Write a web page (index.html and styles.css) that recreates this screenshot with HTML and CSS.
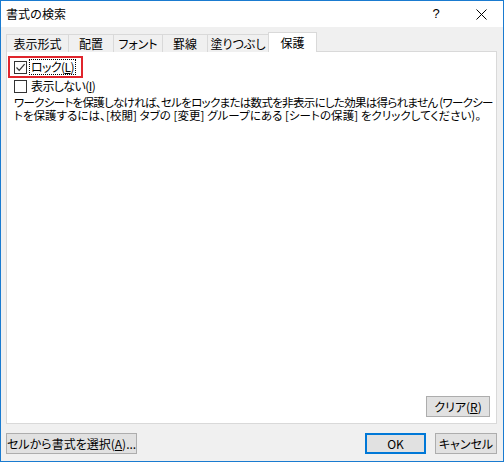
FILE: index.html
```html
<!DOCTYPE html>
<html lang="ja">
<head>
<meta charset="utf-8">
<title>書式の検索</title>
<link rel="stylesheet" href="styles.css">
</head>
<body>
<div class="window">
  <div class="titlebar">
    <span class="title">書式の検索</span>
    <span class="help">?</span>
    <span class="close">
      <svg width="11" height="11" viewBox="0 0 11 11"><path d="M0.5 0.5 L10.5 10.5 M10.5 0.5 L0.5 10.5" stroke="#000" stroke-width="1" fill="none"/></svg>
    </span>
  </div>
  <div class="body">
    <div class="tabs">
      <div class="tab t1">表示形式</div>
      <div class="tab t2">配置</div>
      <div class="tab t3">フォント</div>
      <div class="tab t4">罫線</div>
      <div class="tab t5">塗りつぶし</div>
      <div class="tab t6 active">保護</div>
    </div>
    <div class="panel">
      <div class="lockrow">
        <span class="box">
          <svg width="11" height="11" viewBox="0 0 11 11"><path d="M1.5 5.5 L4.2 8.3 L9.6 2.2" stroke="#333" stroke-width="1.2" fill="none"/></svg>
        </span>
        <span class="lbl focus">ロック(<u>L</u>)</span>
      </div>
      <div class="row">
        <span class="box"></span>
        <span class="lbl">表示しない(<u>I</u>)</span>
      </div>
      <p class="desc"><span class="line l1">ワークシートを保護しなければ、セルをロックまたは数式を非表示にした効果は得られません (ワークシー</span><span class="line l2">トを保護するには、[校閲] タブの [変更] グループにある [シートの保護] をクリックしてください)。</span></p>
      <div class="panel-foot">
        <button class="btn clear">クリア(<u>R</u>)</button>
      </div>
    </div>
    <div class="footer">
      <button class="btn pick">セルから書式を選択(<u>A</u>)...</button>
      <span class="spacer"></span>
      <button class="btn ok">OK</button>
      <button class="btn cancel">キャンセル</button>
    </div>
  </div>
</div>
</body>
</html>
```

FILE: styles.css
```css
html, body {
  margin: 0;
  padding: 0;
  background: #f0f0f0;
}

.window {
  width: 504px;
  height: 462px;
  box-sizing: border-box;
  border: 1px solid #1a7bd0;
  background: #f0f0f0;
  display: flex;
  flex-direction: column;
  font-family: "Noto Sans CJK JP", "Noto Sans", sans-serif;
  font-size: 12px;
  font-feature-settings: "palt";
  color: #000;
  overflow: hidden;
}

.titlebar {
  height: 26px;
  flex: none;
  background: #fff;
  display: flex;
  align-items: center;
}

.title {
  flex: 1;
  margin-left: 5px;
  line-height: 16px;
  font-size: 12px;
  font-feature-settings: normal;
}

.help {
  width: 10px;
  margin-right: 18px;
  text-align: center;
  font-family: "Liberation Sans", sans-serif;
  font-size: 13px;
  line-height: 16px;
}

.close {
  width: 44px;
  height: 26px;
  display: flex;
  align-items: center;
  justify-content: center;
}

.body {
  flex: 1;
  display: flex;
  flex-direction: column;
  padding: 0 6px 0 5px;
}

.tabs {
  display: flex;
  align-items: flex-end;
  height: 20px;
  margin-top: 5px;
  position: relative;
  z-index: 1;
  margin-bottom: -1px;
}

.tab {
  box-sizing: border-box;
  height: 18px;
  border: 1px solid #d9d9d9;
  border-bottom: none;
  margin-left: -1px;
  background: #f0f0f0;
  display: flex;
  align-items: center;
  justify-content: center;
  line-height: 14px;
  white-space: nowrap;
}

.tab:first-child { margin-left: 0; }
.t1 { width: 63px; }
.t2 { width: 46px; }
.t3 { width: 50px; }
.t4 { width: 46px; }
.t5 { width: 62px; }
.t6 { width: 49px; }

.tab.active {
  height: 20px;
  background: #fff;
}

.panel {
  box-sizing: border-box;
  height: 373px;
  flex: none;
  background: #fff;
  border: 1px solid #d9d9d9;
  display: flex;
  flex-direction: column;
  align-items: flex-start;
}

.lockrow {
  box-sizing: border-box;
  height: 22px;
  margin: 4px 0 0 1px;
  padding: 0 5px 0 4px;
  border: 2px solid #e0252c;
  display: flex;
  align-items: center;
}

.row {
  height: 14px;
  margin-top: 1px;
  padding-left: 7px;
  display: flex;
  align-items: center;
}

.box {
  box-sizing: border-box;
  width: 13px;
  height: 13px;
  border: 1px solid #333;
  background: #fff;
  display: flex;
  align-items: center;
  justify-content: center;
  flex: none;
}

.lbl {
  line-height: 14px;
  margin-left: 4px;
  white-space: nowrap;
  letter-spacing: -0.6px;
}

.lbl.focus {
  margin-left: 2px;
  padding: 0 1px;
  border: 1px dotted #000;
}

.desc {
  margin: 3px 0 0 7px;
  font-size: 11.5px;
  line-height: 13px;
}

.line {
  display: block;
  white-space: nowrap;
}

.l1 { letter-spacing: -0.7px; }
.l2 { letter-spacing: 0.05px; }

.panel-foot {
  margin-top: auto;
  align-self: flex-end;
  margin-right: 6px;
  margin-bottom: 6px;
}

.btn {
  box-sizing: border-box;
  height: 21px;
  padding: 0;
  border: 1px solid #adadad;
  background: #e1e1e1;
  font-family: "Noto Sans CJK JP", "Noto Sans", sans-serif;
  font-size: 12px;
  font-feature-settings: "palt";
  line-height: 14px;
  color: #000;
  white-space: nowrap;
}

.clear { width: 64px; }

.footer {
  display: flex;
  margin-top: 9px;
}

.spacer { flex: 1; }

.pick { width: 131px; }

.ok {
  width: 61px;
  border: 2px solid #0078d7;
  margin-right: 9px;
}

.cancel { width: 62px; }
```
